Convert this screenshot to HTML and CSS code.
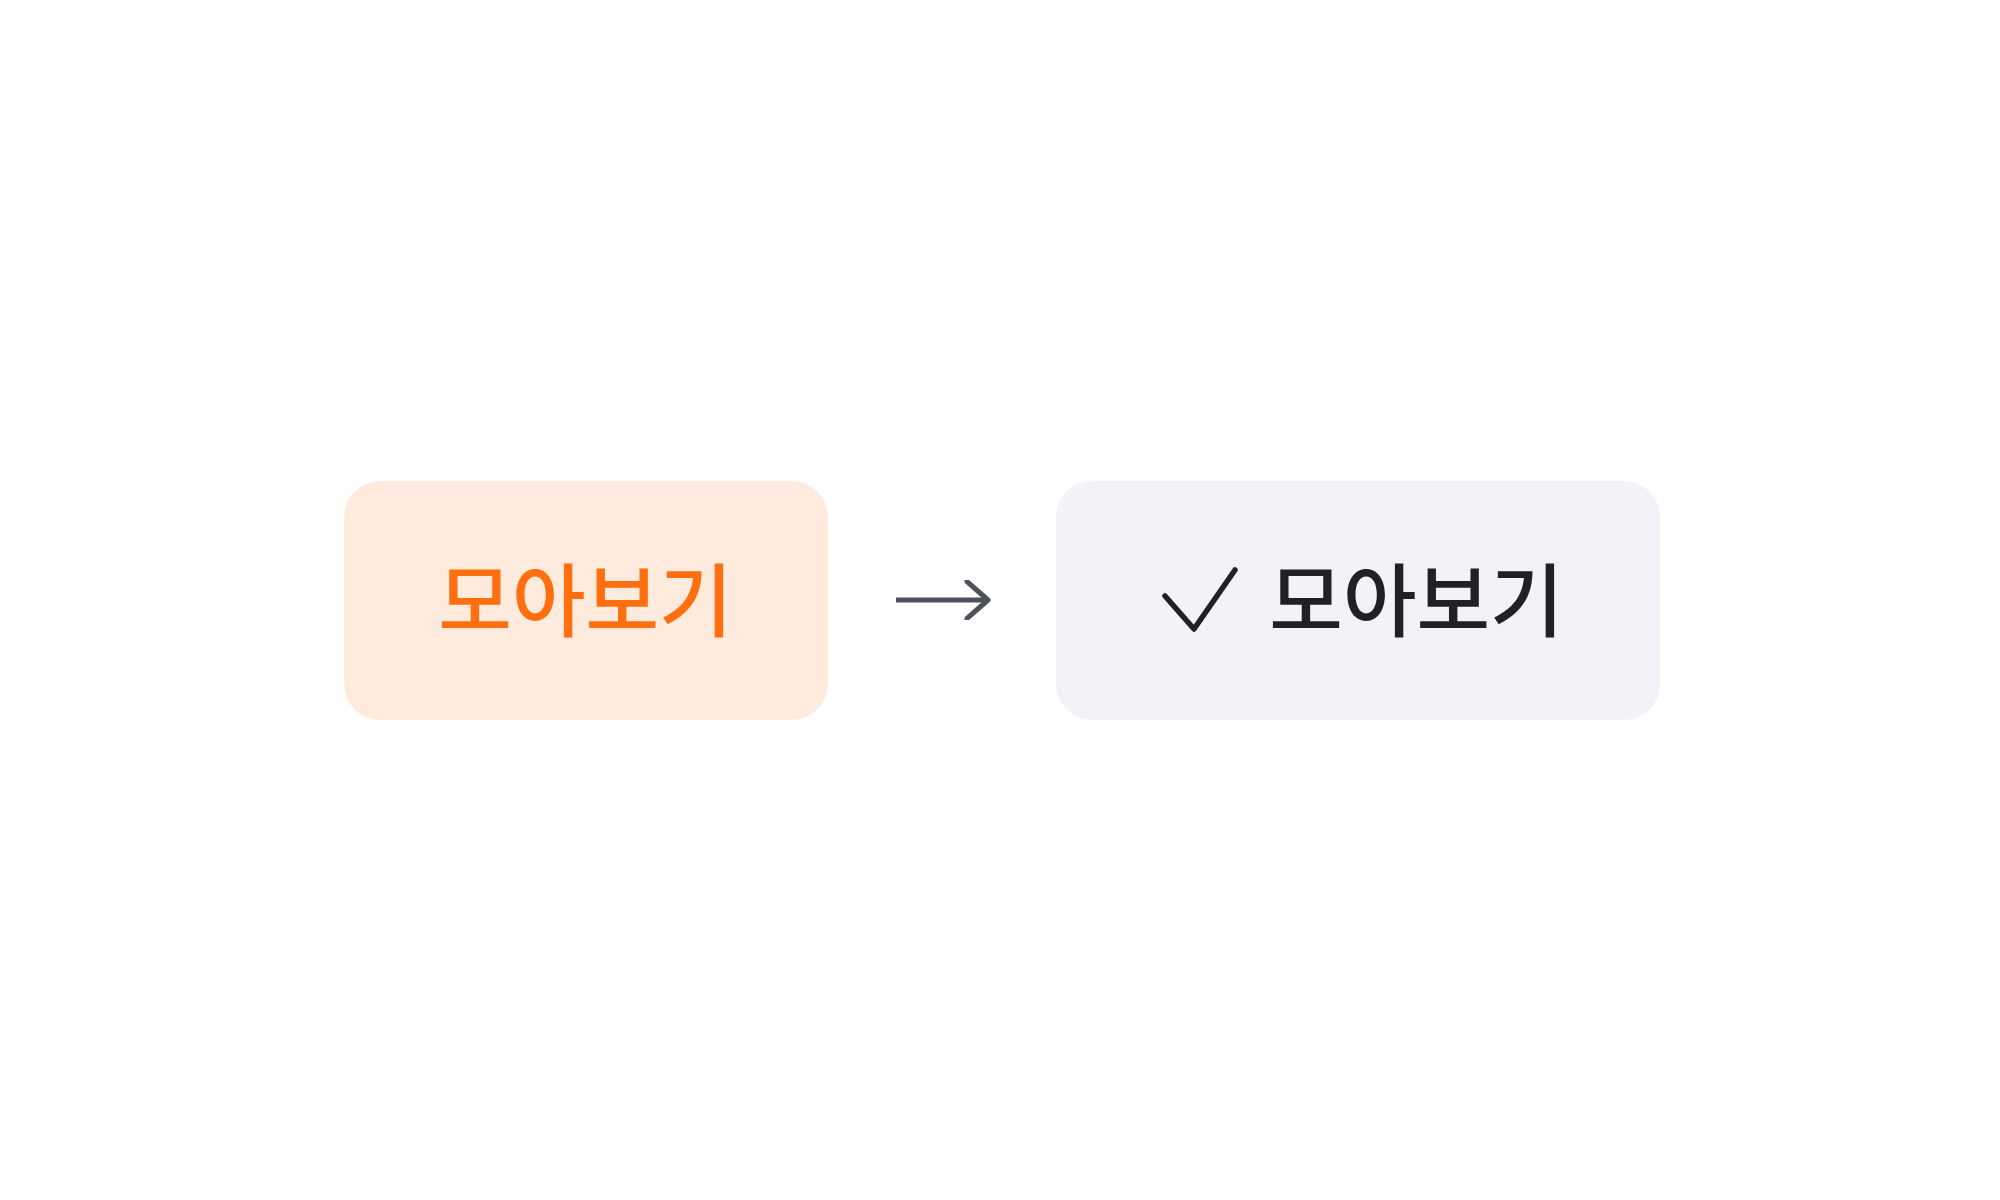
FILE: index.html
```html
<!DOCTYPE html>
<html lang="ko">
<head>
<meta charset="utf-8">
<link rel="stylesheet" href="styles.css">
</head>
<body>
<main class="stage">
  <div class="chip chip-before">
    <span class="label">모아보기</span>
  </div>
  <svg class="arrow" width="100" height="40" viewBox="0 0 100 40" aria-hidden="true">
    <line x1="4" y1="20" x2="96" y2="20" stroke="#4d5159" stroke-width="5"/>
    <polyline points="75,1.5 96,20 75,38.5" fill="none" stroke="#4d5159" stroke-width="5" stroke-linecap="round" stroke-linejoin="round"/>
  </svg>
  <div class="chip chip-after">
    <svg class="check" width="80" height="70" viewBox="0 0 80 70" aria-hidden="true">
      <polyline points="5,31 34,64 75,5" fill="none" stroke="#212124" stroke-width="5.5" stroke-linecap="round" stroke-linejoin="round"/>
    </svg>
    <span class="label">모아보기</span>
  </div>
</main>
</body>
</html>
```

FILE: styles.css
```css
html, body {
  margin: 0;
  padding: 0;
  background: #ffffff;
}

.stage {
  width: 2000px;
  height: 1200px;
  display: flex;
  align-items: center;
  justify-content: center;
  gap: 64px;
  padding-left: 3px;
  box-sizing: border-box;
}

.chip {
  height: 239px;
  border-radius: 36px;
  display: flex;
  align-items: center;
  justify-content: center;
  box-sizing: border-box;
}

.chip-before {
  width: 484px;
  background: #ffebde;
  color: #ff6f0f;
}

.chip-after {
  width: 604px;
  background: #f2f3f6;
  color: #212124;
  gap: 29px;
  padding-left: 9px;
}

.label {
  font-family: "Noto Sans CJK KR", "Noto Sans", sans-serif;
  font-weight: 500;
  font-size: 80px;
  line-height: 1;
  padding-bottom: 10px;
}

.arrow {
  display: block;
  flex: none;
}

.check {
  display: block;
  flex: none;
}
```
